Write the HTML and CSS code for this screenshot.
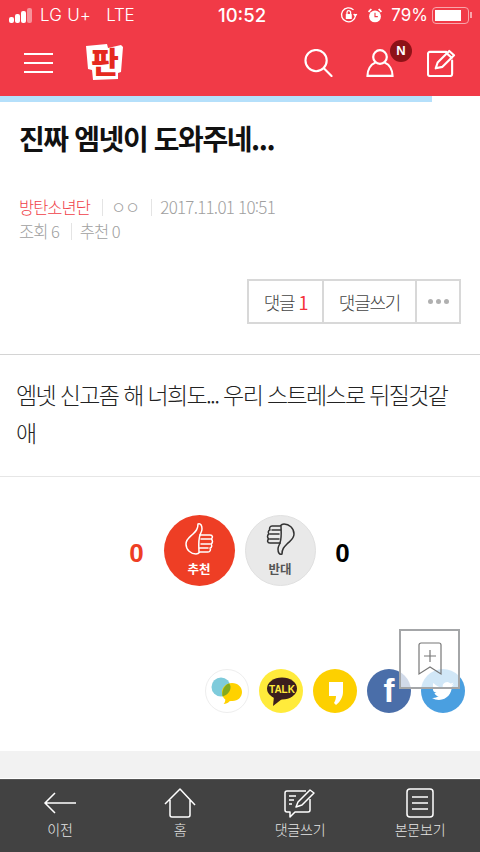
FILE: index.html
```html
<!DOCTYPE html>
<html lang="ko">
<head>
  <meta charset="UTF-8">
  <title>진짜 엠넷이 도와주네...</title>
  <link rel="stylesheet" href="styles.css">
</head>
<body>
<div class="page">

  <div class="status">
    <div class="status-left">
      <span class="signal"><i></i><i></i><i></i><i class="off"></i></span>
      <span class="carrier">LG U+</span>
      <span class="net">LTE</span>
    </div>
    <div class="clock">10:52</div>
    <div class="status-right">
      <svg width="18" height="18" viewBox="0 0 18 18" fill="none" stroke="#fff" stroke-width="1.3"><path d="M15.5 9.5a7 7 0 1 1-2-5.6"/><path d="M16.8 8l-1.4 2-1.7-2" fill="#fff"/><rect x="5.8" y="8" width="6" height="5" rx=".6" fill="#fff" stroke="none"/><path d="M7 8V6.5a1.8 1.8 0 0 1 3.6 0V8"/></svg>
      <svg class="alarm" width="16" height="17" viewBox="0 0 17 17" fill="#fff"><circle cx="8.5" cy="9.5" r="6.3"/><path d="M1 4l3-3 1.3 1.2-3 3zM16 4l-3-3-1.3 1.2 3 3z"/><path d="M8.5 5.5v4.2h3" fill="none" stroke="#f13a47" stroke-width="1.2"/></svg>
      <span class="pct">79%</span>
      <span class="battery"><span class="level"></span></span>
      <span class="nub"></span>
    </div>
  </div>

  <header class="topbar">
    <div class="burger"><i></i><i></i><i></i></div>
    <svg class="logo" width="40" height="38" viewBox="0 0 40 38">
      <path d="M1 3l21-2 1 4 13-3 2 2-2 25-3 1v6l-25 1-1-10-4-1z" fill="#fff"/>
      <text x="20" y="30" text-anchor="middle" class="logo-txt">판</text>
    </svg>
    <div class="top-icons">
      <svg width="29" height="28" viewBox="0 0 30 29" fill="none" stroke="#fff" stroke-width="2.2" stroke-linecap="round"><circle cx="12.5" cy="12" r="11"/><path d="M20.5 20l8 8"/></svg>
      <div class="user">
        <svg width="28" height="28" viewBox="0 0 28 28" fill="none" stroke="#fff" stroke-width="2.2"><circle cx="14" cy="8" r="6.8"/><path d="M9.5 13.5C4.5 15.5 1.5 21 1.5 26.8h25c0-5.8-3-11.3-8-13.300"/></svg>
        <span class="badge">N</span>
      </div>
      <svg width="29" height="28" viewBox="0 0 30 29" fill="none" stroke="#fff" stroke-width="2.2" stroke-linejoin="round" stroke-linecap="round"><path d="M20 3H3a2 2 0 0 0-2 2v21a2 2 0 0 0 2 2h21a2 2 0 0 0 2-2V12"/><path d="M9 20l2-6L23 2l5 4.5L16 18.5z"/><path d="M20.5 4.5l5 4.5"/></svg>
    </div>
  </header>

  <div class="progress"><div class="progress-fill"></div></div>

  <h1 class="title">진짜 엠넷이 도와주네...</h1>

  <div class="meta">
    <div class="meta-row">
      <span class="cat">방탄소년단</span><span class="sep"></span><span>ㅇㅇ</span><span class="sep"></span><span class="date">2017.11.01 10:51</span>
    </div>
    <div class="meta-row">
      <span>조회 6</span><span class="sep"></span><span>추천 0</span>
    </div>
  </div>

  <div class="btn-row">
    <div class="btns">
      <span class="btn btn-reply">댓글 <em>1</em></span>
      <span class="btn btn-write">댓글쓰기</span>
      <span class="btn btn-more"><i></i><i></i><i></i></span>
    </div>
  </div>

  <div class="content">엠넷 신고좀 해 너희도... 우리 스트레스로 뒤질것같애</div>

  <div class="vote">
    <span class="count up">0</span>
    <div class="circle circle-up">
      <svg width="29" height="32" viewBox="0 0 29 32" fill="none" stroke="#fff" stroke-width="1.5" stroke-linejoin="round" stroke-linecap="round"><path d="M11 31C6 31 1 27 1 21c0-5 4-7 7-10 3-3 5-5 5-10 3-1 4 2 4 5 0 3-2 5-2 6h10c3 0 3 3 1 4 2 1 2 4 0 5 1 1 1 4-1 4 1 2 0 4-2 4h-8c-1 1-3 2-4 2z"/><path d="M16 16h9M16 21h9M15 25h8M15 12c-2 6-1 13-1 17"/></svg>
      <span>추천</span>
    </div>
    <div class="circle circle-down">
      <svg width="29" height="32" viewBox="0 0 29 32" fill="none" stroke="#333" stroke-width="1.5" stroke-linejoin="round" stroke-linecap="round"><g transform="rotate(180 14.5 16)"><path d="M11 31C6 31 1 27 1 21c0-5 4-7 7-10 3-3 5-5 5-10 3-1 4 2 4 5 0 3-2 5-2 6h10c3 0 3 3 1 4 2 1 2 4 0 5 1 1 1 4-1 4 1 2 0 4-2 4h-8c-1 1-3 2-4 2z"/><path d="M16 16h9M16 21h9M15 25h8M15 12c-2 6-1 13-1 17"/></g></svg>
      <span>반대</span>
    </div>
    <span class="count down">0</span>
  </div>

  <div class="share">
    <span class="sns sns-story">
      <svg width="44" height="44" viewBox="0 0 44 44"><circle cx="16" cy="18" r="9.5" fill="#7ecbdb"/><path d="M27 14c6 0 10 4 10 9s-4 9-9.5 9c-1 0-2 0-3 .2-1.5 1.8-3.5 2.8-6 2.8 1-1 1.8-2.3 1.8-4.5-2-1.5-3.3-4-3.3-7.5C17 18 21.5 14 27 14z" fill="#ffd200"/><path d="M24 14.5c1 1 1.5 2.2 1.5 3.5 0 4.500-3 8-8 9.400-1-5 1.500-11.500 6.500-12.900z" fill="#82a91f"/></svg>
    </span>
    <span class="sns sns-talk">
      <svg width="44" height="44" viewBox="0 0 44 44"><ellipse cx="23" cy="19.5" rx="15" ry="11" fill="#3b1e1e"/><path d="M15 27l-1 10 9-7z" fill="#3b1e1e"/><text x="23" y="23.5" text-anchor="middle" class="talk-txt">TALK</text></svg>
    </span>
    <span class="sns sns-quote">
      <svg width="44" height="44" viewBox="0 0 44 44"><path d="M16 13h14v10c0 5-3 10-7 13l-2-2c1-2 2-4 2-7h-7z" fill="#fff"/></svg>
    </span>
    <span class="sns sns-fb"><span class="f">f</span></span>
    <span class="sns sns-tw">
      <svg width="22" height="22" viewBox="0 0 24 24"><path d="M23.953 4.570a10 10 0 0 1-2.825.775 4.958 4.958 0 0 0 2.163-2.723c-.951.555-2.005.959-3.127 1.184a4.920 4.920 0 0 0-8.384 4.482C7.690 8.095 4.067 6.130 1.640 3.162a4.822 4.822 0 0 0-.666 2.475c0 1.710.870 3.213 2.188 4.096a4.904 4.904 0 0 1-2.228-.616v.060a4.923 4.923 0 0 0 3.946 4.827 4.996 4.996 0 0 1-2.212.085 4.936 4.936 0 0 0 4.604 3.417 9.867 9.867 0 0 1-6.102 2.105c-.390 0-.779-.023-1.170-.067a13.995 13.995 0 0 0 7.557 2.209c9.053 0 13.998-7.496 13.998-13.985 0-.210 0-.420-.015-.630A9.935 9.935 0 0 0 24 4.590z" fill="#fff"/></svg>
    </span>
  </div>

  <div class="scrap">
    <svg width="24" height="34" viewBox="0 0 24 34" fill="none" stroke="#777" stroke-width="1.2"><path d="M1 32V3a2 2 0 0 1 2-2h18a2 2 0 0 1 2 2v29l-11-7z"/><path d="M12 8v12M6 14h12"/></svg>
  </div>

  <div class="band"></div>

  <nav class="tabbar">
    <div class="tab">
      <svg width="34" height="30" viewBox="0 0 34 30" fill="none" stroke="#fff" stroke-width="1.5"><path d="M33 15H2M12 5L2 15l10 10"/></svg>
      <span>이전</span>
    </div>
    <div class="tab">
      <svg width="32" height="30" viewBox="0 0 32 30" fill="none" stroke="#fff" stroke-width="1.5" stroke-linejoin="round"><path d="M1 16L16 1l15 16M6 12v15a2 2 0 0 0 2 2h16a2 2 0 0 0 2-2V12"/></svg>
      <span>홈</span>
    </div>
    <div class="tab">
      <svg width="32" height="30" viewBox="0 0 32 30" fill="none" stroke="#fff" stroke-width="1.5" stroke-linejoin="round"><path d="M22 3H3a2 2 0 0 0-2 2v17a2 2 0 0 0 2 2h3v5l5-5h13a2 2 0 0 0 2-2V11"/><path d="M12 19l2-5L26 2l4 3-12 12z"/><path d="M5 8h7M5 12h5M5 16h3"/></svg>
      <span>댓글쓰기</span>
    </div>
    <div class="tab">
      <svg width="28" height="30" viewBox="0 0 28 30" fill="none" stroke="#fff" stroke-width="1.5"><rect x="1" y="1" width="26" height="28" rx="3"/><path d="M6 9h16M6 15h16M6 21h16"/></svg>
      <span>본문보기</span>
    </div>
  </nav>

</div>
</body>
</html>
```

FILE: styles.css
```css
* { box-sizing: border-box; }
html, body { margin: 0; padding: 0; }
body { font-family: "Noto Sans CJK KR", "Liberation Sans", sans-serif; background: #fff; color: #222; }
.page { position: relative; width: 480px; height: 852px; overflow: hidden; display: flex; flex-direction: column; }

/* status bar */
.status { height: 30px; background: #f13a47; color: #fff; display: flex; align-items: center; justify-content: space-between; padding: 0 8px 0 9px; position: relative; font-family: "Inter", "Liberation Sans", sans-serif; font-size: 17px; font-weight: 300; }
.status-left { display: flex; align-items: center; gap: 6px; }
.signal { display: flex; align-items: flex-end; gap: 1px; height: 15px; }
.signal i { display: block; width: 5px; background: #fff; border-radius: 2px; }
.signal i:nth-child(1) { height: 6px; }
.signal i:nth-child(2) { height: 9px; }
.signal i:nth-child(3) { height: 12px; }
.signal i.off { height: 15px; background: #f7929a; }
.carrier { margin-left: 2px; letter-spacing: .2px; }
.net { margin-left: 9px; letter-spacing: -.2px; }
.clock { position: absolute; left: 218px; top: 4px; font-size: 18.5px; font-weight: 500; line-height: 22px; }
.status-right { display: flex; align-items: center; gap: 4px; }
.alarm { margin-left: 5px; }
.pct { font-size: 17px; margin: 0 0 0 4px; font-weight: 400; }
.battery { width: 37px; height: 17px; border: 1px solid #f9a5ab; border-radius: 4px; padding: 2px; display: block; }
.level { display: block; width: 26px; height: 11px; background: #fff; }
.nub { width: 2px; height: 6px; background: #f9a5ab; margin-left: -3px; }

/* header */
.topbar { height: 66px; background: #f13a47; display: flex; align-items: center; padding: 0 24px; }
.burger { display: flex; flex-direction: column; gap: 7px; width: 29px; margin-right: 32px; }
.burger i { display: block; height: 2px; background: #fff; }
.logo { margin-top: -2px; overflow: visible; }
.logo-txt { font-family: "Noto Sans CJK KR", sans-serif; font-size: 30px; font-weight: 900; fill: #e5291f; }
.top-icons { margin-left: auto; display: flex; align-items: center; gap: 33px; }
.user { position: relative; height: 28px; }
.badge { position: absolute; left: 24px; top: -9px; width: 22px; height: 22px; border-radius: 50%; background: #8e1217; color: #fff; font: bold 13px/22px "Liberation Sans", sans-serif; text-align: center; }

.progress { height: 6px; background: #fff; }
.progress-fill { width: 432px; height: 6px; background: #b5e0fb; }

/* article head */
.title { margin: 16px 0 0 19px; font-size: 28px; line-height: 40px; font-weight: 700; letter-spacing: -1.4px; color: #111; }
.meta { margin: 37px 0 0 19px; font-size: 16.5px; line-height: 24px; color: #a0a0a0; letter-spacing: -1px; font-weight: 300; }
.meta-row { display: flex; align-items: center; }
.cat { color: #f04048; }
.sep { width: 1px; height: 17px; background: #e4e4e4; margin: 0 8px 0 12px; }
.date { letter-spacing: -.75px; font-size: 17px; }

.btn-row { display: flex; justify-content: flex-end; padding: 0 19px; margin-top: 36px; }
.btns { display: flex; height: 45px; border: 2px solid #d8d8d8; }
.btn { display: flex; align-items: center; justify-content: center; font-size: 18px; color: #444; letter-spacing: -1.2px; font-weight: 300; }
.btn em { font-style: normal; font-weight: 400; color: #f5333b; margin-left: 4px; }
.btn-reply { width: 75px; border-right: 2px solid #d8d8d8; }
.btn-write { width: 93px; border-right: 2px solid #d8d8d8; }
.btn-more { width: 42px; gap: 3px; }
.btn-more i { width: 5px; height: 5px; border-radius: 50%; background: #b0b0b0; }

/* article body */
.content { margin-top: 30px; border-top: 1px solid #d4d4d4; border-bottom: 1px solid #e6e6e6; padding: 20px 24px 9px 16px; height: 123px; font-size: 23px; line-height: 38px; letter-spacing: -1.65px; color: #222; font-weight: 300; }

.vote { display: flex; align-items: center; justify-content: center; margin-top: 38px; gap: 10px; padding-right: 1px; }
.count { font: bold 26px/30px "Liberation Sans", sans-serif; color: #000; width: 18px; text-align: center; margin-top: 5px; }
.count.up { color: #ee3e25; margin-right: 8px; }
.count.down { margin-left: 8px; }
.circle { width: 71px; height: 71px; border-radius: 50%; display: flex; flex-direction: column; align-items: center; padding-top: 8px; font-size: 12.5px; font-weight: 700; line-height: 15px; }
.circle span { margin-top: 6px; }
.circle-up { background: #ee3e25; color: #fff; }
.circle-down { background: #e9e9e9; border: 1px solid #e0e0e0; color: #555; padding-top: 7px; }

/* share */
.share { display: flex; justify-content: flex-end; gap: 10px; padding-right: 15px; margin-top: 83px; }
.sns { width: 44px; height: 44px; border-radius: 50%; display: block; }
.sns-story { background: #fff; border: 1px solid #eee; }
.sns-story svg { margin: -1px; }
.sns-talk { background: #ffeb3b; }
.talk-txt { font: bold 10px "Liberation Sans", sans-serif; fill: #ffeb3b; }
.sns-quote { background: #fdd000; }
.sns-fb { background: #4a6ea9; text-align: center; }
.f { display: block; color: #fff; font: bold 33px/44px "Liberation Sans", sans-serif; }
.sns-tw { background: #4a9fe0; display: flex; align-items: center; justify-content: center; }

.scrap { position: absolute; left: 399px; top: 629px; width: 61px; height: 60px; background: rgba(255,255,255,.75); border: 2px solid #a4a6a8; display: flex; align-items: center; justify-content: center; }

.band { height: 27px; background: #f2f2f2; margin-top: 38px; }

/* bottom nav */
.tabbar { flex: 1; border-top: 1px solid #fff; background: #424242; box-shadow: inset 0 1px 0 #555; display: flex; }
.tab { flex: 1; display: flex; flex-direction: column; align-items: center; color: #e6e6e6; font-size: 14px; line-height: 18px; padding-top: 9px; font-weight: 300; letter-spacing: -.2px; }
.tab svg { height: 30px; }
.tab span { margin-top: 2px; }
```
